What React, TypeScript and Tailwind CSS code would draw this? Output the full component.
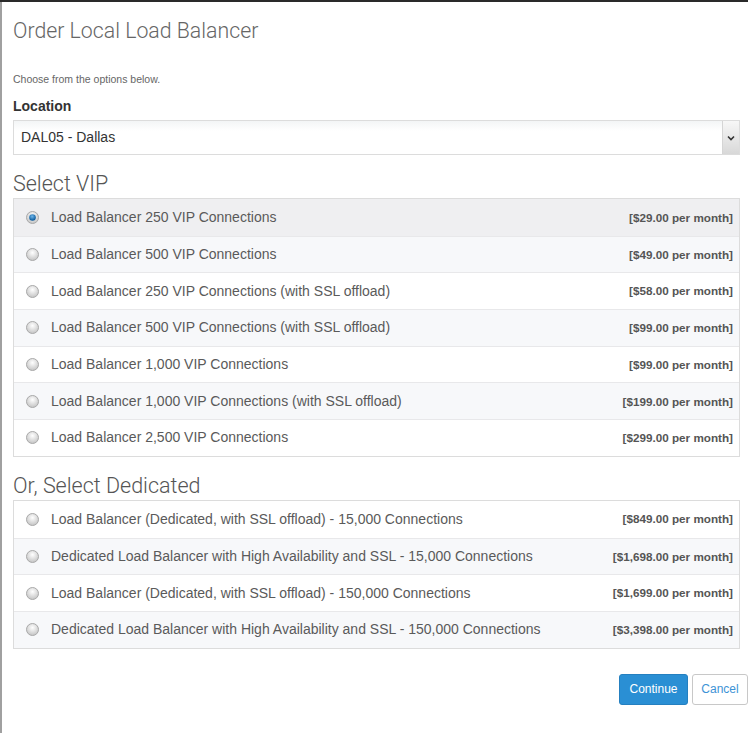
import React from "react";

const vip = [
  ["Load Balancer 250 VIP Connections", "$29.00"],
  ["Load Balancer 500 VIP Connections", "$49.00"],
  ["Load Balancer 250 VIP Connections (with SSL offload)", "$58.00"],
  ["Load Balancer 500 VIP Connections (with SSL offload)", "$99.00"],
  ["Load Balancer 1,000 VIP Connections", "$99.00"],
  ["Load Balancer 1,000 VIP Connections (with SSL offload)", "$199.00"],
  ["Load Balancer 2,500 VIP Connections", "$299.00"],
];
const ded = [
  ["Load Balancer (Dedicated, with SSL offload) - 15,000 Connections", "$849.00"],
  ["Dedicated Load Balancer with High Availability and SSL - 15,000 Connections", "$1,698.00"],
  ["Load Balancer (Dedicated, with SSL offload) - 150,000 Connections", "$1,699.00"],
  ["Dedicated Load Balancer with High Availability and SSL - 150,000 Connections", "$3,398.00"],
];

function Radio({ on }: { on?: boolean }) {
  return (
    <svg width="13" height="13" viewBox="0 0 13 13" className="shrink-0">
      <defs>
        <radialGradient id="rg" cx="50%" cy="35%" r="60%">
          <stop offset="0%" stopColor="#ffffff" />
          <stop offset="100%" stopColor="#c8c8c8" />
        </radialGradient>
        <radialGradient id="bg" cx="45%" cy="35%" r="60%">
          <stop offset="0%" stopColor="#6fb6ea" />
          <stop offset="100%" stopColor="#0b5a9c" />
        </radialGradient>
      </defs>
      <circle cx="6.5" cy="6.5" r="6" fill="url(#rg)" stroke="#a9a9a9" strokeWidth="1" />
      {on && <circle cx="6.5" cy="6.5" r="3.3" fill="url(#bg)" />}
    </svg>
  );
}

function Row({ label, price, idx, on }: { label: string; price: string; idx: number; on?: boolean }) {
  const bg = on ? "bg-[#efeff1]" : idx % 2 === 1 ? "bg-[#f7f8fa]" : "bg-white";
  return (
    <div className={`flex items-center h-[36.7px] pl-[12px] ${idx > 0 ? "border-t border-[#e8e8ea]" : ""} ${bg}`}>
      <Radio on={on} />
      <div className="ml-[12px] flex-1 text-[14px] text-[#5a5a5a]">{label}</div>
      <div className="pr-[6px] text-[11.7px] font-semibold text-[#555]">
        [{price} <span className="font-bold">per month</span>]
      </div>
    </div>
  );
}

const heading = { fontFamily: 'Roboto, "Liberation Sans", sans-serif', fontWeight: 300 } as const;

export default function App() {
  return (
    <div className="w-[748px] h-[733px] bg-white border-t-2 border-[#2a2a2a] flex" style={{ fontFamily: '"Liberation Sans", Arial, sans-serif' }}>
      <div className="w-[2px] bg-[#a0a0a0] shrink-0" />
      <div className="flex-1 pl-[11px] pr-[8px]">
        <div className="mt-[17px] text-[21.3px] text-[#666] leading-[24px]" style={heading}>
          Order Local Load Balancer
        </div>
        <div className="mt-[29px] text-[10.5px] text-[#666] leading-[14px]">Choose from the options below.</div>
        <div className="mt-[12px] text-[14px] font-bold text-[#333] leading-[16px]">Location</div>
        <div className="mt-[6px] h-[35px] border border-[#dcdcdc] flex items-stretch" style={{ background: "linear-gradient(#f3f5f6, #fff 30%)" }}>
          <div className="flex-1 flex items-center pl-[7px] text-[14px] text-[#333]">DAL05 - Dallas</div>
          <div className="w-[17px] border-l border-[#d5d5d5] flex items-center justify-center" style={{ background: "linear-gradient(#f7f7f7, #d8d8d8)" }}>
            <svg width="8" height="6" viewBox="0 0 8 6"><path d="M1 1.5 L4 4.5 L7 1.5" stroke="#333" strokeWidth="1.6" fill="none" /></svg>
          </div>
        </div>
        <div className="mt-[17px] text-[21.5px] text-[#555] leading-[24px]" style={heading}>
          Select VIP
        </div>
        <div className="mt-[2px] border border-[#dcdcdc]">
          {vip.map((r, i) => (
            <Row key={i} label={r[0]} price={r[1]} idx={i} on={i === 0} />
          ))}
        </div>
        <div className="mt-[17px] text-[21.5px] text-[#555] leading-[24px]" style={heading}>
          Or, Select Dedicated
        </div>
        <div className="mt-[2px] border border-[#dcdcdc]">
          {ded.map((r, i) => (
            <Row key={i} label={r[0]} price={r[1]} idx={i} />
          ))}
        </div>
        <div className="mt-[25px] flex justify-end gap-[4px] -mr-[8px]">
          <button className="h-[31px] w-[69px] rounded-[3px] bg-[#2a8fd4] text-white text-[12px] border border-[#2580c0]">Continue</button>
          <button className="h-[31px] w-[56px] rounded-[3px] bg-white text-[#3d93d6] text-[12px] border border-[#c8c8c8]">Cancel</button>
        </div>
      </div>
    </div>
  );
}
